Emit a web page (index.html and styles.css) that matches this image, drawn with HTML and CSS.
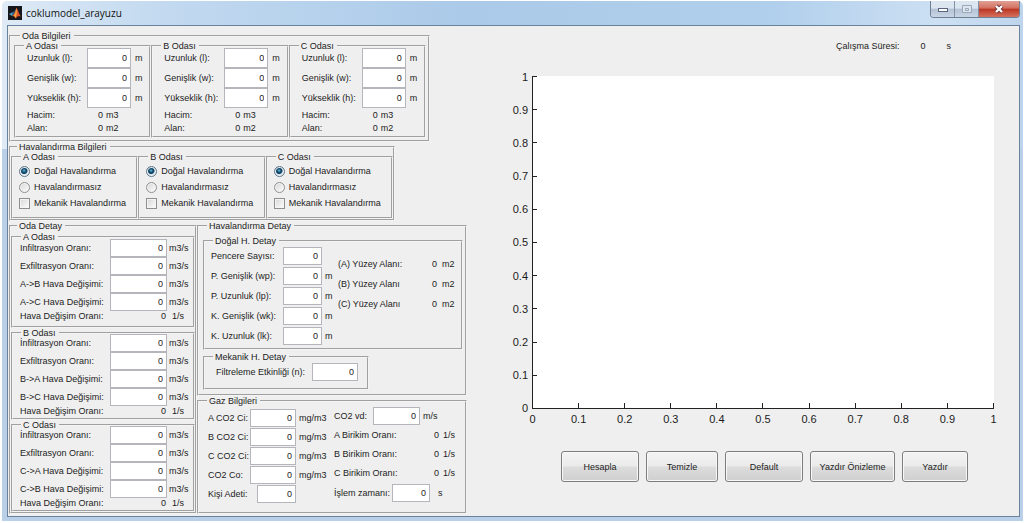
FILE: index.html
```html
<!DOCTYPE html>
<html lang="tr">
<head>
<meta charset="utf-8">
<title>coklumodel_arayuzu</title>
<link rel="stylesheet" href="styles.css">
</head>
<body>
<div class="window">
  <header class="titlebar">
    <svg class="logo" viewBox="0 0 14 14" aria-hidden="true">
      <rect width="14" height="14" fill="#15171c"/>
      <path d="M1 8 4.500 6.200 6 7.500 4 10z" fill="#4d9fc4"/>
      <path d="M4.500 6.200 6.500 5 8.500 2 8 7 6 9.500 4 10z" fill="#2b5d86"/>
      <path d="M8.500 1.500C9.800 4 11 8 13 10.500 11 9.500 10 9.700 7.500 12.500 7 10.500 5.500 9.800 4 10 6.500 8.500 7.500 5 8.500 1.500z" fill="#e0552a"/>
      <path d="M8.500 2C9 5 9.300 8 7.500 12 7 10.800 6.500 10 5.800 9.800 7.500 7.500 7.800 5 8.500 2z" fill="#f3a83c"/>
    </svg>
    <h1 class="title">coklumodel_arayuzu</h1>
    <div class="controls">
      <button class="control" type="button" aria-label="Simge durumuna küçült"><svg width="12" height="10" viewBox="0 0 12 10"><rect x="1.500" y="4.500" width="9" height="3" fill="#fff" stroke="#5b6780"/></svg></button>
      <button class="control" type="button" aria-label="Ekranı kapla" disabled><svg width="12" height="10" viewBox="0 0 12 10"><path d="M1.500 1.500h9v7h-9z M4.500 4.500h3v2h-3z" fill="#dde5ee" stroke="#9aa8ba"/></svg></button>
      <button class="control control-close" type="button" aria-label="Kapat"><svg width="12" height="10" viewBox="0 0 12 10"><path d="M3 2 9 8M9 2 3 8" stroke="#6b3036" stroke-width="4"/><path d="M3 2 9 8M9 2 3 8" stroke="#fff" stroke-width="2.400"/></svg></button>
    </div>
  </header>

  <main class="client">
    <form class="forms">
      <fieldset class="group rooms">
        <legend>Oda Bilgileri</legend>
        <div class="row">
          <fieldset class="group room">
            <legend>A Odası</legend>
            <div class="dims">
              <label for="a-l">Uzunluk (l):</label><input id="a-l" type="text" value="0"><span>m</span>
              <label for="a-w">Genişlik (w):</label><input id="a-w" type="text" value="0"><span>m</span>
              <label for="a-h">Yükseklik (h):</label><input id="a-h" type="text" value="0"><span>m</span>
            </div>
            <div class="totals">
              <span>Hacim:</span><output>0</output><span>m3</span>
              <span>Alan:</span><output>0</output><span>m2</span>
            </div>
          </fieldset>
          <fieldset class="group room">
            <legend>B Odası</legend>
            <div class="dims">
              <label for="b-l">Uzunluk (l):</label><input id="b-l" type="text" value="0"><span>m</span>
              <label for="b-w">Genişlik (w):</label><input id="b-w" type="text" value="0"><span>m</span>
              <label for="b-h">Yükseklik (h):</label><input id="b-h" type="text" value="0"><span>m</span>
            </div>
            <div class="totals">
              <span>Hacim:</span><output>0</output><span>m3</span>
              <span>Alan:</span><output>0</output><span>m2</span>
            </div>
          </fieldset>
          <fieldset class="group room">
            <legend>C Odası</legend>
            <div class="dims">
              <label for="c-l">Uzunluk (l):</label><input id="c-l" type="text" value="0"><span>m</span>
              <label for="c-w">Genişlik (w):</label><input id="c-w" type="text" value="0"><span>m</span>
              <label for="c-h">Yükseklik (h):</label><input id="c-h" type="text" value="0"><span>m</span>
            </div>
            <div class="totals">
              <span>Hacim:</span><output>0</output><span>m3</span>
              <span>Alan:</span><output>0</output><span>m2</span>
            </div>
          </fieldset>
        </div>
      </fieldset>

      <fieldset class="group vents">
        <legend>Havalandırma Bilgileri</legend>
        <div class="row">
          <fieldset class="group vent">
            <legend>A Odası</legend>
            <label class="option"><input type="radio" name="vent-a" checked>Doğal Havalandırma</label>
            <label class="option"><input type="radio" name="vent-a">Havalandırmasız</label>
            <label class="option"><input type="checkbox">Mekanik Havalandırma</label>
          </fieldset>
          <fieldset class="group vent">
            <legend>B Odası</legend>
            <label class="option"><input type="radio" name="vent-b" checked>Doğal Havalandırma</label>
            <label class="option"><input type="radio" name="vent-b">Havalandırmasız</label>
            <label class="option"><input type="checkbox">Mekanik Havalandırma</label>
          </fieldset>
          <fieldset class="group vent">
            <legend>C Odası</legend>
            <label class="option"><input type="radio" name="vent-c" checked>Doğal Havalandırma</label>
            <label class="option"><input type="radio" name="vent-c">Havalandırmasız</label>
            <label class="option"><input type="checkbox">Mekanik Havalandırma</label>
          </fieldset>
        </div>
      </fieldset>

      <div class="details">
        <fieldset class="group room-detail">
          <legend>Oda Detay</legend>
          <fieldset class="group flow flow-first">
            <legend>A Odası</legend>
            <div class="rates">
              <label for="a-inf">Infiltrasyon Oranı:</label><input id="a-inf" type="text" value="0"><span>m3/s</span>
              <label for="a-exf">Exfiltrasyon Oranı:</label><input id="a-exf" type="text" value="0"><span>m3/s</span>
              <label for="a-b">A-&gt;B Hava Değişimi:</label><input id="a-b" type="text" value="0"><span>m3/s</span>
              <label for="a-c">A-&gt;C Hava Değişimi:</label><input id="a-c" type="text" value="0"><span>m3/s</span>
            </div>
            <div class="rate-total"><span>Hava Değişim Oranı:</span><output>0</output><span>1/s</span></div>
          </fieldset>
          <fieldset class="group flow">
            <legend>B Odası</legend>
            <div class="rates">
              <label for="b-inf">İnfiltrasyon Oranı:</label><input id="b-inf" type="text" value="0"><span>m3/s</span>
              <label for="b-exf">Exfiltrasyon Oranı:</label><input id="b-exf" type="text" value="0"><span>m3/s</span>
              <label for="b-a">B-&gt;A Hava Değişimi:</label><input id="b-a" type="text" value="0"><span>m3/s</span>
              <label for="b-c">B-&gt;C Hava Değişimi:</label><input id="b-c" type="text" value="0"><span>m3/s</span>
            </div>
            <div class="rate-total"><span>Hava Değişim Oranı:</span><output>0</output><span>1/s</span></div>
          </fieldset>
          <fieldset class="group flow">
            <legend>C Odası</legend>
            <div class="rates">
              <label for="c-inf">İnfiltrasyon Oranı:</label><input id="c-inf" type="text" value="0"><span>m3/s</span>
              <label for="c-exf">Exfiltrasyon Oranı:</label><input id="c-exf" type="text" value="0"><span>m3/s</span>
              <label for="c-a">C-&gt;A Hava Değişimi:</label><input id="c-a" type="text" value="0"><span>m3/s</span>
              <label for="c-b">C-&gt;B Hava Değişimi:</label><input id="c-b" type="text" value="0"><span>m3/s</span>
            </div>
            <div class="rate-total"><span>Hava Değişim Oranı:</span><output>0</output><span>1/s</span></div>
          </fieldset>
        </fieldset>

        <div class="column">
          <fieldset class="group vent-detail">
            <legend>Havalandırma Detay</legend>
            <fieldset class="group natural">
              <legend>Doğal H. Detay</legend>
              <div class="row">
                <div class="openings">
                  <label for="win-n">Pencere Sayısı:</label><input id="win-n" type="text" value="0"><span></span>
                  <label for="win-w">P. Genişlik (wp):</label><input id="win-w" type="text" value="0"><span>m</span>
                  <label for="win-l">P. Uzunluk (lp):</label><input id="win-l" type="text" value="0"><span>m</span>
                  <label for="door-w">K. Genişlik (wk):</label><input id="door-w" type="text" value="0"><span>m</span>
                  <label for="door-l">K. Uzunluk (lk):</label><input id="door-l" type="text" value="0"><span>m</span>
                </div>
                <div class="areas">
                  <span>(A) Yüzey Alanı:</span><output>0</output><span>m2</span>
                  <span>(B) Yüzey Alanı</span><output>0</output><span>m2</span>
                  <span>(C) Yüzey Alanı</span><output>0</output><span>m2</span>
                </div>
              </div>
            </fieldset>
            <fieldset class="group mechanical">
              <legend>Mekanik H. Detay</legend>
              <div class="filter"><label for="filter">Filtreleme Etkinliği (n):</label><input id="filter" type="text" value="0"></div>
            </fieldset>
          </fieldset>

          <fieldset class="group gas">
            <legend>Gaz Bilgileri</legend>
            <div class="row">
              <div class="levels">
                <label for="ci-a">A CO2 Ci:</label><input id="ci-a" type="text" value="0"><span>mg/m3</span>
                <label for="ci-b">B CO2 Ci:</label><input id="ci-b" type="text" value="0"><span>mg/m3</span>
                <label for="ci-c">C CO2 Ci:</label><input id="ci-c" type="text" value="0"><span>mg/m3</span>
                <label for="co">CO2 Co:</label><input id="co" type="text" value="0"><span>mg/m3</span>
                <label for="people">Kişi Adeti:</label><input id="people" class="short" type="text" value="0"><span></span>
              </div>
              <div class="buildup">
                <div class="line speed"><label for="vd">CO2 vd:</label><input id="vd" type="text" value="0"><span>m/s</span></div>
                <div class="line result"><span>A Birikim Oranı:</span><output>0</output><span>1/s</span></div>
                <div class="line result"><span>B Birikim Oranı:</span><output>0</output><span>1/s</span></div>
                <div class="line result"><span>C Birikim Oranı:</span><output>0</output><span>1/s</span></div>
                <div class="line time"><label for="time">İşlem zamanı:</label><input id="time" class="short" type="text" value="0"><span>s</span></div>
              </div>
            </div>
          </fieldset>
        </div>
      </div>
    </form>

    <section class="results">
      <p class="elapsed"><span>Çalışma Süresi:</span><output>0</output><span>s</span></p>
      <div class="chart">
        <ol class="axis-y">
          <li>1</li><li>0.9</li><li>0.8</li><li>0.7</li><li>0.6</li><li>0.5</li><li>0.4</li><li>0.3</li><li>0.2</li><li>0.1</li><li>0</li>
        </ol>
        <div class="plot"></div>
        <ol class="axis-x">
          <li>0</li><li>0.1</li><li>0.2</li><li>0.3</li><li>0.4</li><li>0.5</li><li>0.6</li><li>0.7</li><li>0.8</li><li>0.9</li><li>1</li>
        </ol>
      </div>
      <div class="actions">
        <button type="button" class="action">Hesapla</button>
        <button type="button" class="action action-small">Temizle</button>
        <button type="button" class="action">Default</button>
        <button type="button" class="action action-wide">Yazdır Önizleme</button>
        <button type="button" class="action action-narrow">Yazdır</button>
      </div>
    </section>
  </main>
</div>
</body>
</html>
```

FILE: styles.css
```css
* { box-sizing: border-box; }

body {
  margin: 0;
  background: #fff;
  color: #1c1c1c;
  font: 9px/12px "Liberation Sans", Arial, sans-serif;
}

.window {
  display: flex;
  flex-direction: column;
  min-height: calc(100vh - 3px);
  margin: 1px 1px 2px 2px;
  padding: 0 3px 4px 5px;
  border-radius: 5px 5px 0 0;
  background: linear-gradient(90deg, #dfeaf6 0, #c3daf0 15%, #abcae9 45%, #b0cfec 75%, #cde0f3 92%, #bdd5ec 100%) top / 100% 148px no-repeat, #b9d0e8;
}

/* Title bar */
.titlebar {
  display: flex;
  align-items: center;
  height: 24px;
  padding-left: 1px;
}
.logo { width: 14px; height: 14px; }
.title {
  flex: 1;
  margin: 0 0 0 4px;
  font: 10px/14px "Open Sans", "Noto Sans", sans-serif;
  color: #111;
}
.controls {
  display: flex;
  align-self: flex-start;
  border: 1px solid #6e7f94;
  border-top: 0;
  border-radius: 0 0 4px 4px;
  overflow: hidden;
}
.control {
  display: flex;
  align-items: center;
  justify-content: center;
  width: 24px;
  height: 16px;
  padding: 0;
  border: 0;
  border-right: 1px solid #8292a6;
  background: linear-gradient(#dce6f1 45%, #b3c2d4 50%, #c8d6e6);
}
.control-close {
  width: 40px;
  border-right: 0;
  background: linear-gradient(#e0a094, #d3705f 45%, #bb3524 50%, #d6705c);
}

/* Client area */
.client {
  display: flex;
  flex: 1;
  border: 1px solid #69839f;
  background: #efefef;
}
.forms {
  flex: none;
  padding: 5px 0 0 1px;
}

/* Etched group boxes */
.group {
  min-width: 0;
  margin: 0;
  padding: 0;
  border: 2px groove #f4f4f4;
}
.group > legend {
  margin-left: 6px;
  padding: 0 3px 0 2px;
  line-height: 10px;
}
.row { display: flex; }

input[type="text"] {
  width: 100%;
  min-width: 0;
  height: 18px;
  margin: 0;
  padding: 0 3px 0 0;
  border: 1px solid #b4b6bb;
  border-radius: 0;
  background: #fff;
  color: inherit;
  font: inherit;
  text-align: right;
}
output { text-align: right; }

/* Room sizes */
.rooms {
  width: 421px;
  padding: 0 2px 2px 3px;
}
.room {
  flex: 1;
  padding: 0 0 2px 11px;
}
.room > legend { margin-left: -3px; }
.dims {
  display: grid;
  grid-template-columns: 60px 44px auto;
  grid-auto-rows: 20px;
  align-items: center;
  margin-top: -3px;
}
.dims input { height: 20px; }
.dims span { padding-left: 4px; }
.totals {
  display: grid;
  grid-template-columns: 60px 13px auto;
  grid-auto-rows: 13px;
  column-gap: 3px;
  align-items: center;
}

/* Ventilation choice */
.vents { width: 386px; }
.vent {
  flex: 1;
  padding: 1px 0 6px 6px;
}
.vent > legend { margin-left: 2px; }
.option {
  display: flex;
  align-items: center;
  gap: 4px;
  height: 16px;
}
.option input {
  appearance: none;
  width: 11px;
  height: 11px;
  margin: 0;
  border: 1px solid #8e8f8f;
  background: linear-gradient(135deg, #d5d5d5, #fff);
  box-shadow: inset 0 0 0 1px #f4f4f4;
}
.option input[type="radio"] { border-radius: 50%; }
.option input[type="radio"]:checked {
  border-color: #5b7689;
  background: radial-gradient(circle at 45% 40%, #5fc0e0 0, #14486b 2px, #14486b 3px, #dfe8ee 4px);
}

/* Detail columns */
.details {
  display: grid;
  grid-template-columns: 188px 270px;
}
.column {
  display: flex;
  flex-direction: column;
}
.room-detail { padding-top: 1px; }
.flow { padding: 0 0 2px 7px; }
.flow-first { padding: 1px 0 5px 7px; }
.flow > legend { margin-left: 1px; }
.rates {
  display: grid;
  grid-template-columns: 90px 57px auto;
  grid-auto-rows: 18px;
  align-items: center;
  margin-top: -4px;
}
.rates span { padding-left: 2px; }
.rate-total {
  display: grid;
  grid-template-columns: 90px 50px auto;
  column-gap: 6px;
  line-height: 10px;
}

.vent-detail { padding: 5px 2px 4px 4px; }
.vent-detail > legend { margin-left: 4px; }
.natural { padding: 0 0 2px 6px; }
.natural > legend { margin-left: 2px; }
.openings {
  display: grid;
  grid-template-columns: 72px 39px 16px;
  grid-auto-rows: 20px;
  align-items: center;
}
.openings span { padding-left: 3px; }
.areas {
  display: grid;
  grid-template-columns: 80px 14px auto;
  grid-auto-rows: 20px;
  column-gap: 5px;
  align-items: center;
  align-self: flex-start;
  padding-top: 8px;
}
.mechanical {
  width: 166px;
  margin-top: 2px;
  padding: 1px 9px 7px 11px;
}
.mechanical > legend { margin-left: -3px; }
.filter {
  display: grid;
  grid-template-columns: 1fr 46px;
  align-items: center;
}

.gas {
  flex: 1;
  padding: 0 0 0 9px;
}
.gas > legend { margin-left: -1px; }
.levels {
  display: grid;
  grid-template-columns: 42px 46px 38px;
  grid-auto-rows: 19px;
  align-items: center;
  padding-top: 2px;
}
.levels span { padding-left: 3px; }
.levels .short {
  justify-self: end;
  width: 39px;
}
.line {
  display: grid;
  align-items: center;
  height: 19px;
}
.speed { grid-template-columns: 39px 47px auto; }
.result {
  grid-template-columns: 93px 8px auto;
  column-gap: 4px;
}
.time {
  grid-template-columns: 58px 38px auto;
  height: 21px;
}
.speed span { padding-left: 3px; }
.time span { padding-left: 8px; }

/* Results */
.results {
  flex: 1;
  min-width: 0;
  padding: 14px 25px 0 44px;
}
.elapsed {
  display: flex;
  justify-content: flex-end;
  gap: 21px;
  margin: 0 43px 24px 0;
}
.chart {
  display: grid;
  grid-template-columns: 21px 1fr;
  grid-template-rows: 333px 20px;
  font-size: 11px;
}
.plot {
  border-left: 1px solid #222;
  border-bottom: 1px solid #222;
  background: #fff;
}
.axis-y, .axis-x {
  display: flex;
  justify-content: space-between;
  margin: 0;
  padding: 0;
  list-style: none;
}
.axis-y { flex-direction: column; }
.axis-x { grid-column: 2; }
.axis-y li, .axis-x li {
  position: relative;
  display: flex;
  align-items: center;
}
.axis-y li {
  height: 1px;
  padding-right: 4px;
  justify-content: flex-end;
}
.axis-x li {
  width: 1px;
  height: 20px;
  justify-content: center;
}
.axis-y li::before, .axis-x li::before {
  content: "";
  position: absolute;
  background: #222;
}
.axis-y li::before {
  left: 100%;
  top: 0;
  width: 5px;
  height: 1px;
}
.axis-x li::before {
  bottom: 100%;
  left: 0;
  width: 1px;
  height: 6px;
}

.actions {
  display: flex;
  gap: 7px;
  margin: 22px 0 0 50px;
}
.action {
  width: 78px;
  height: 31px;
  padding: 0;
  border: 1px solid #7d7d7d;
  border-radius: 3px;
  background: linear-gradient(#f3f3f3, #ebebeb 48%, #dcdcdc 52%, #cfcfcf);
  box-shadow: inset 0 0 0 1px #f8f8f8;
  color: inherit;
  font: inherit;
}
.action-small { width: 72px; }
.action-wide { width: 85px; }
.action-narrow { width: 66px; }
```
